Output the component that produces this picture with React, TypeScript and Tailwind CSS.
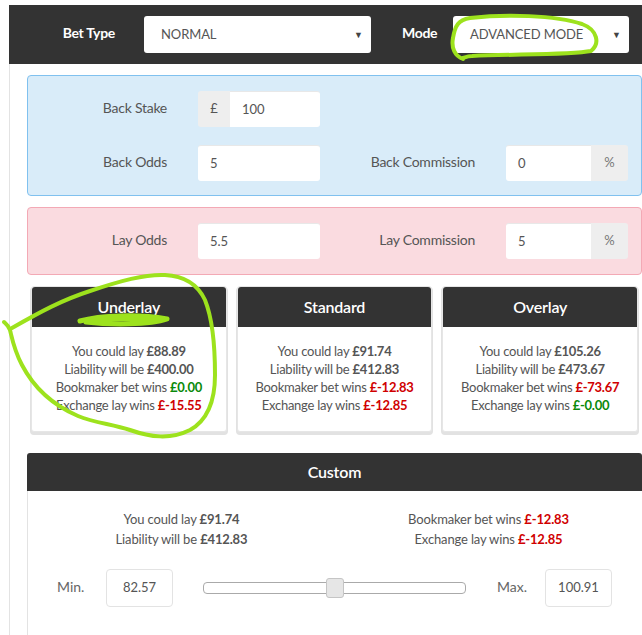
import { ReactNode } from "react";

const font = { fontFamily: "Lato, 'Noto Sans', sans-serif" };

function Select({ value, width }: { value: string; width: string }) {
  return (
    <div className={`${width} h-[37px] bg-white rounded-[3px] flex items-center justify-between pl-[17px] pr-[8px]`}>
      <span className="text-[13px] text-[#555] tracking-[-0.1px]">{value}</span>
      <span className="text-[9px] text-[#444]">▼</span>
    </div>
  );
}

function Field({ value, width, prefix, suffix }: { value: string; width: string; prefix?: string; suffix?: string }) {
  return (
    <div className="flex h-[36px]">
      {prefix && (
        <div className="w-[32px] bg-[#eee] rounded-l-[3px] flex items-center justify-center text-[13px] text-[#555]">
          {prefix}
        </div>
      )}
      <div
        className={`${width} bg-white flex items-center pl-[12px] text-[13px] text-[#555] border-t border-[#e8e8e8] ${
          prefix ? "rounded-r-[3px]" : suffix ? "rounded-l-[3px]" : "rounded-[3px]"
        }`}
      >
        {value}
      </div>
      {suffix && (
        <div className="w-[37px] bg-[#eee] rounded-r-[3px] flex items-center justify-center text-[13px] text-[#777]">
          {suffix}
        </div>
      )}
    </div>
  );
}

function Label({ children, width }: { children: ReactNode; width: string }) {
  return (
    <div className={`${width} text-right text-[14px] tracking-[-0.25px] text-[#555] shrink-0 -mt-[3px]`}>{children}</div>
  );
}

function Value({ children, color = "text-[#555]" }: { children: ReactNode; color?: string }) {
  return <b className={`font-bold ${color}`}>{children}</b>;
}

const GREEN = "text-[#0a8a0a]";
const RED = "text-[#d00000]";

const cards = [
  { title: "Underlay", lay: "£88.89", liability: "£400.00", book: "£0.00", bookC: GREEN, ex: "£-15.55", exC: RED },
  { title: "Standard", lay: "£91.74", liability: "£412.83", book: "£-12.83", bookC: RED, ex: "£-12.85", exC: RED },
  { title: "Overlay", lay: "£105.26", liability: "£473.67", book: "£-73.67", bookC: RED, ex: "£-0.00", exC: GREEN },
];

export default function App() {
  return (
    <div className="relative w-[642px] h-[635px] bg-white overflow-hidden pt-[5px]" style={font}>
      {/* Top bar */}
      <div className="ml-[9px] h-[59px] bg-[#333] flex items-center">
        <div className="w-[106px] text-right text-[14px] font-bold tracking-[-0.3px] text-white -mt-[4px]">Bet Type</div>
        <div className="ml-[29px]">
          <Select value="NORMAL" width="w-[227px]" />
        </div>
        <div className="ml-[31px] w-[51px] text-[14px] font-bold tracking-[-0.3px] text-white -mt-[4px]">Mode</div>
        <div>
          <Select value="ADVANCED MODE" width="w-[176px]" />
        </div>
      </div>

      {/* Body */}
      <div className="ml-[9px] border-l border-[#e3e3e3] pl-[17px] pt-[11px] h-[571px]">
        {/* Back panel */}
        <div className="w-[615px] bg-[#d9ecf9] border border-[#80c1ef] rounded-[4px] pt-[15px] pb-[14px] flex flex-col gap-[18px]">
          <div className="flex items-center">
            <Label width="w-[139px]">Back Stake</Label>
            <div className="ml-[31px]">
              <Field value="100" width="w-[90px]" prefix="£" />
            </div>
          </div>
          <div className="flex items-center">
            <Label width="w-[139px]">Back Odds</Label>
            <div className="ml-[31px]">
              <Field value="5" width="w-[122px]" />
            </div>
            <Label width="w-[155px]">Back Commission</Label>
            <div className="ml-[31px]">
              <Field value="0" width="w-[85px]" suffix="%" />
            </div>
          </div>
        </div>

        {/* Lay panel */}
        <div className="mt-[11px] w-[615px] bg-[#fadbe0] border border-[#f3a9b5] rounded-[4px] py-[15px] flex items-center">
          <Label width="w-[139px]">Lay Odds</Label>
          <div className="ml-[31px]">
            <Field value="5.5" width="w-[122px]" />
          </div>
          <Label width="w-[155px]">Lay Commission</Label>
          <div className="ml-[31px]">
            <Field value="5" width="w-[85px]" suffix="%" />
          </div>
        </div>

        {/* Result cards */}
        <div className="mt-[11px] w-[615px] px-[4px] grid grid-cols-3 gap-[10px]">
          {cards.map((c) => (
            <div key={c.title} className="rounded-[3px] bg-white shadow-[0_2px_0_1px_#e2e2e2] border border-[#e6e6e6]">
              <div className="h-[40px] bg-[#333] rounded-t-[3px] flex items-center justify-center text-white text-[16px] font-semibold tracking-[-0.2px]">
                {c.title}
              </div>
              <div className="pt-[15px] pb-[17px] text-center text-[13px] tracking-[-0.25px] leading-[18px] text-[#555]">
                <div>
                  You could lay <Value>{c.lay}</Value>
                </div>
                <div>
                  Liability will be <Value>{c.liability}</Value>
                </div>
                <div>
                  Bookmaker bet wins <Value color={c.bookC}>{c.book}</Value>
                </div>
                <div>
                  Exchange lay wins <Value color={c.exC}>{c.ex}</Value>
                </div>
              </div>
            </div>
          ))}
        </div>

        {/* Custom */}
        <div className="mt-[21px] w-[615px]">
          <div className="h-[38px] bg-[#333] rounded-t-[3px] flex items-center justify-center text-white text-[16px] font-semibold tracking-[-0.2px]">
            Custom
          </div>
          <div className="border-l border-[#e3e3e3] h-[200px] pt-[18px]">
            <div className="grid grid-cols-2 text-center text-[13px] tracking-[-0.15px] leading-[20px] text-[#555]">
              <div>
                <div>
                  You could lay <Value>£91.74</Value>
                </div>
                <div>
                  Liability will be <Value>£412.83</Value>
                </div>
              </div>
              <div>
                <div>
                  Bookmaker bet wins <Value color={RED}>£-12.83</Value>
                </div>
                <div>
                  Exchange lay wins <Value color={RED}>£-12.85</Value>
                </div>
              </div>
            </div>
            <div className="mt-[20px] flex items-center pl-[29px]">
              <span className="w-[49px] text-[14px] text-[#666] -mt-[3px]">Min.</span>
              <div className="w-[67px] h-[38px] border border-[#e3e3e3] rounded-[4px] flex items-center justify-center text-[13px] text-[#555]">
                82.57
              </div>
              <div className="ml-[30px] relative w-[263px] h-[12px] border border-[#aaa] rounded-[4px] bg-white">
                <div className="absolute left-[122px] top-[-5px] w-[18px] h-[20px] rounded-[3px] border border-[#c5c5c5] bg-[#e6e6e6]" />
              </div>
              <span className="ml-[31px] w-[48px] text-[14px] text-[#666] -mt-[3px]">Max.</span>
              <div className="w-[67px] h-[38px] border border-[#e3e3e3] rounded-[4px] flex items-center justify-center text-[13px] text-[#555]">
                100.91
              </div>
            </div>
          </div>
        </div>
      </div>

      {/* Hand-drawn annotations */}
      <svg className="absolute inset-0 pointer-events-none" width="642" height="635" viewBox="0 0 642 635" fill="none">
        <g stroke="#9de21d" strokeWidth="4" strokeLinecap="round" strokeLinejoin="round">
          <path d="M463,59 C455,56 451,48 453,38 C455,26 458,20 470,18 C505,14 555,15 582,24 C598,30 600,44 591,51 C570,55 515,54 472,56 C466,56 462,59 461,58" />
          <path d="M12,328 C40,312 62,300 90,291 C120,281 145,274 165,275 C185,276 198,285 205,300 C213,320 215,345 215,375 C215,400 208,420 190,430 C170,440 150,437 130,430 C112,424 95,423 78,416 C55,406 35,390 22,365 C14,350 12,338 10,330 C8,325 5,323 4,322" />
          <path d="M80,321 C100,315 140,314 167,319 C150,325 110,325 86,322 C105,318 135,318 155,321" strokeWidth="5" />
        </g>
      </svg>
    </div>
  );
}
